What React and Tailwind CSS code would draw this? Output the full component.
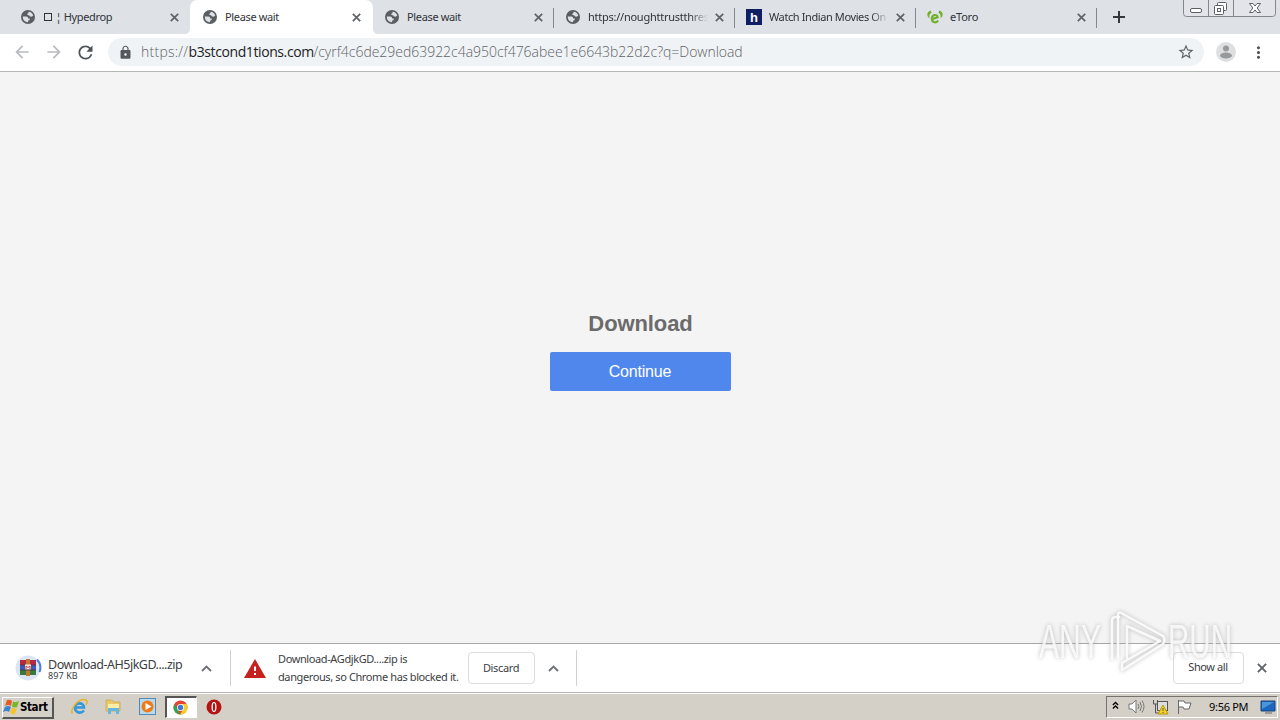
import React from 'react';
import { MdArrowBack, MdArrowForward, MdRefresh, MdLock, MdStarBorder, MdMoreVert } from 'react-icons/md';

const Globe = () => (
    <svg width="14" height="14" viewBox="0 0 14 14">
        <circle cx="7" cy="7" r="7" fill="#5a5e63" />
        <path d="M7.500 1.700C9.800 1.900 11.500 3.300 12.200 5.300 11.800 6.600 10.500 6.900 9.200 6.500 8.500 6.200 8.700 5.400 7.700 5.300 6.700 5.100 5.900 4.700 6.400 3.600 7.400 3.500 7.700 2.700 7.500 1.700Z" fill="#dee1e6" />
        <path d="M1.800 6.500H5.200C6.700 6.600 7.200 7.400 7.100 8.500H8.800C8.900 9.900 8.400 10.500 7.100 10.500V12.200C4.200 12.300 1.700 10.200 1.800 6.500Z" fill="#dee1e6" />
    </svg>
);

const Hotstar = () => (
    <div className="flex h-4 w-4 items-center justify-center bg-[#101f63] font-['Liberation_Sans',sans-serif] text-[13px] font-bold leading-none text-white">h</div>
);

const Etoro = () => (
    <svg width="17" height="16" viewBox="0 0 17 16">
        <path d="M3.800 1C-.6 2.500-.6 7 2.600 9.500 2.200 6.600 2.500 5 4.800 3.600ZM13.200 1C17.600 2.500 17.600 7 14.400 9.500 14.800 6.600 14.500 5 12.200 3.600Z" fill="#72b02a" />
        <path d="M5.200 10.300 11.300 8.200C10.800 4.700 5.200 5 5.200 9.800 5.200 14.400 10.400 14.600 11.800 11.700" fill="none" stroke="#72b02a" strokeWidth="2.300" />
    </svg>
);

const Cross = ({ size = 9 }) => (
    <svg width={size} height={size} viewBox="0 0 9 9" stroke="#5f6368" strokeWidth="1.700">
        <path d="M.8.8 8.2 8.2M8.2.8.8 8.2" />
    </svg>
);

const Chevron = () => (
    <svg width="11" height="7" viewBox="0 0 11 7" fill="none" stroke="#6f7377" strokeWidth="1.900">
        <path d="M1 6 5.5 1.5 10 6" />
    </svg>
);

const tabs = [
    { title: <><span className="ml-px mr-px inline-block size-2 border border-[#303338]" /> ¦ Hypedrop</>, icon: <Globe />, width: 'w-[182px]', text: 'tracking-[-0.35px]' },
    { title: 'Please wait', icon: <Globe />, width: 'w-[182px]', text: 'tracking-[-0.35px]', active: true },
    { title: 'Please wait', icon: <Globe />, width: 'w-[181px]', text: 'tracking-[-0.35px]' },
    { title: 'https://noughttrustthres', icon: <Globe />, width: 'w-[181px]', text: 'tracking-[-0.25px]', line: true, fade: true },
    { title: 'Watch Indian Movies On', icon: <Hotstar />, width: 'w-[181px]', text: 'tracking-[-0.4px]', line: true, fade: true },
    { title: 'eToro', icon: <Etoro />, width: 'w-[181px]', text: 'tracking-[-0.2px]', line: true },
];

const Tab = ({ tab }) => (
    <div className={`relative flex h-[34px] shrink-0 items-center ${tab.width}`}>
        {tab.active && (
            <svg className="absolute -left-1.5 top-0" width="194" height="34" viewBox="0 0 194 34">
                <path d="M0 34C4 34 6 32 6 28V8C6 3 9 0 14 0H181C186 0 189 3 189 8V28C189 32 191 34 194 34Z" fill="#fff" />
            </svg>
        )}
        {tab.line && <div className="absolute left-0 top-2 h-5 w-px bg-[#85888e]" />}
        <div className="relative ml-3 flex w-[18px] items-center justify-center pr-0.5">{tab.icon}</div>
        <div className={`relative ml-[5px] w-[120px] overflow-hidden whitespace-nowrap text-[11px] text-[#303338] ${tab.text} ${tab.fade ? 'mask-r-from-85%' : ''}`}>{tab.title}</div>
        <div className="relative ml-[7px]"><Cross /></div>
    </div>
);

const TabStrip = () => (
    <div className="flex h-[34px] items-start bg-[#dee1e6] pl-2">
        {tabs.map((tab, i) => <Tab key={i} tab={tab} />)}
        <div className="relative flex h-[34px] w-[88px] items-center pl-[17px]">
            <div className="absolute left-0 top-2 h-5 w-px bg-[#85888e]" />
            <svg width="12" height="12" viewBox="0 0 12 12" stroke="#34373b" strokeWidth="2"><path d="M6 0V12M0 6H12" /></svg>
        </div>
        <svg className="-ml-px" width="93" height="17" viewBox="0 0 93 17" fill="none" stroke="#83868d">
            <path d="M.5 0V13.5Q.5 16.5 3.5 16.5H89.5Q92.5 16.5 92.5 13.5V0M25.5 0V16.5M50.5 0V16.5" fill="#e2e4e9" />
            <g fill="#fff" stroke="#5c6068">
                <rect x="7.500" y="8.500" width="11" height="4" rx="1.500" />
                <rect x="34.500" y="2.500" width="9" height="8" rx="1" />
                <rect x="31.500" y="5.500" width="9" height="9" rx="1" />
                <rect x="34.500" y="8.500" width="3" height="3" />
                <path d="M66.500 3.500H70L72 6 74 3.500H77.500L74.200 8 77.500 12.500H74L72 10 70 12.500H66.500L69.800 8Z" />
            </g>
        </svg>
    </div>
);

const Toolbar = () => (
    <div className="flex h-[38px] items-center border-b border-[#b5b7b5] bg-white pb-px text-[#5f6368]">
        <MdArrowBack className="ml-3 text-[#b9bbbe]" size={20} />
        <MdArrowForward className="ml-3 text-[#b9bbbe]" size={20} />
        <MdRefresh className="ml-[11px] text-[#4e5257]" size={21} />
        <div className="ml-3 flex h-7 w-[1096px] items-center rounded-full bg-[#f0f3f5]">
            <MdLock className="ml-2.5 text-[#55595e]" size={15} />
            <div className="ml-2 flex w-[1036px] whitespace-nowrap pb-px font-['Open_Sans',sans-serif] text-[14px] font-light text-[#5f6368]">
                <span className="w-[47.500px] tracking-[0.25px]">https://</span>
                <span className="w-[125px] font-normal tracking-[-0.4px] text-[#202124]">b3stcond1tions.com</span>
                <span className="tracking-[-0.03px]">/cyrf4c6de29ed63922c4a950cf476abee1e6643b22d2c?q=Download</span>
            </div>
            <MdStarBorder className="shrink-0" size={18} />
        </div>
        <svg className="ml-3" width="20" height="20" viewBox="0 0 20 20">
            <circle cx="10" cy="10" r="10" fill="#dedfe0" />
            <circle cx="10" cy="6.500" r="3" fill="#98999b" />
            <ellipse cx="10" cy="13.500" rx="6" ry="3" fill="#98999b" />
        </svg>
        <MdMoreVert className="ml-[13px] text-[#4e5257]" size={19} />
    </div>
);

const Archive = () => (
    <svg width="27" height="26" viewBox="0 0 27 26">
        <circle cx="13" cy="13" r="12.500" fill="#dbe4f4" />
        <path d="M22 4.500A12 12 0 0 1 24.500 17" fill="none" stroke="#4580dd" strokeWidth="2" />
        <path d="M5 5H21V10H5Z" fill="#b52a43" />
        <path d="M5 10H21V15H5Z" fill="#4357b5" />
        <path d="M5 15H21V20H5Z" fill="#377b3a" />
        <path d="M11 4H15V21H11Z" fill="#c47732" />
        <path d="M10 9.500H16V14.500H10Z" fill="#f4efe8" />
        <path d="M11 14V11L13 12.500 15 11V14" fill="none" stroke="#c34135" />
        <path d="M5 10H10M16 10H21M5 15H21" stroke="#42333b" strokeWidth=".8" />
    </svg>
);

const Shelf = () => (
    <div className="flex h-[49px] items-center border-t border-[#a6a7a6] bg-white text-[11px] text-[#3c4043]">
        <div className="ml-[15px]"><Archive /></div>
        <div className="ml-1.5 flex w-[153px] flex-col whitespace-nowrap pt-0.5">
            <div className="text-[12.500px] leading-[13px] tracking-[-0.5px]">Download-AH5jkGD....zip</div>
            <div className="text-[9px] leading-[9px] tracking-[0.1px]">897 KB</div>
        </div>
        <Chevron />
        <div className="ml-[18px] h-9 w-px bg-[#cfd0d2]" />
        <svg className="ml-[13px]" width="22" height="19" viewBox="0 0 22 19">
            <path d="M11 0 22 19H0Z" fill="#c5221f" />
            <path d="M11 7.500V12M11 14V16" stroke="#fff" strokeWidth="2" />
        </svg>
        <div className="ml-3 w-[190px] whitespace-nowrap leading-[18px] tracking-[-0.39px]">
            <div>Download-AGdjkGD....zip is</div>
            <div>dangerous, so Chrome has blocked it.</div>
        </div>
        <button className="h-8 w-[67px] rounded-[4px] border border-[#dadce0] pr-px tracking-[-0.35px]">Discard</button>
        <div className="ml-[13px]"><Chevron /></div>
        <div className="ml-[17px] h-9 w-px bg-[#cfd0d2]" />
        <button className="ml-auto h-8 w-[71px] rounded-[4px] border border-[#dadce0] pb-0.5 pr-px tracking-[-0.4px]">Show all</button>
        <div className="ml-[13px] mr-[13px]"><Cross size={10} /></div>
    </div>
);

const Watermark = () => (
    <div className="pointer-events-none absolute left-[1030px] top-[602px]">
        <svg width="212" height="76" viewBox="0 0 212 76" className="drop-shadow-[0_0_2px_#aaa]">
            <g fill="none" stroke="#fff" strokeOpacity=".85" strokeWidth="2.500" strokeLinejoin="round" strokeLinecap="round">
                <path d="M89 15H86Q82 15 82 19V57" />
                <path d="M88 55V12Q89 9 93 12L133 34" />
                <path d="M97 56V24L130 39 92 61V68L133 42Q136 38 133 34" />
            </g>
            <g fill="#fff" fillOpacity=".8" fontFamily="Liberation Sans, sans-serif" fontSize="49">
                <text x="9" y="56" textLength="62" lengthAdjust="spacingAndGlyphs">ANY</text>
                <text x="138" y="56" textLength="64" lengthAdjust="spacingAndGlyphs">RUN</text>
            </g>
        </svg>
    </div>
);

const StartFlag = () => (
    <svg width="17" height="16" viewBox="0 0 17 16">
        <path d="M4 1Q7 0 9 2L8 7Q5 5 2 7Z" fill="#e85a24" />
        <path d="M10 2.500Q13 4 16 2L14 8Q11 9 9 7.500Z" fill="#75b72c" />
        <path d="M2 8Q5 6 8 8L6 13Q4 11 0 13Z" fill="#3b82d3" />
        <path d="M9 8.500Q11 10 14 9L12 15Q9 16 7 13.500Z" fill="#f5c32c" />
    </svg>
);

const Taskbar = () => (
    <div className="flex h-7 items-center border-t border-[#b8b5af] bg-[#d4d0c8] text-[11px] text-black shadow-[inset_0_1px_0_#fff]">
        <button className="ml-0.5 mt-0.5 flex h-[22px] w-[52px] items-center border-b-2 border-l border-r-2 border-t border-b-[#555] border-l-white border-r-[#555] border-t-white">
            <StartFlag /><span className="pt-px font-['DejaVu_Sans_Condensed','DejaVu_Sans',sans-serif] text-[11.500px] font-bold tracking-[-0.4px]">Start</span>
        </button>
        <svg className="ml-4" width="18" height="18" viewBox="0 0 18 18">
            <path d="M5 9.500H14C14 4 5 4 5 9.500 5 15 11 16 14 12.500" fill="none" stroke="#3598dc" strokeWidth="2.600" />
            <path d="M2.500 15.500C-1 12 9-1 16 2 18 3 17 5 16 7" fill="none" stroke="#e4b52c" strokeWidth="1.500" />
        </svg>
        <svg className="ml-[17px]" width="17" height="17" viewBox="0 0 17 17">
            <path d="M1 2H7L9 4H15V13H1Z" fill="#e9c967" stroke="#c6a349" strokeWidth=".7" />
            <path d="M3 6H14V10H3Z" fill="#f8edac" /><path d="M3 16V10H14V16H11V13H6V16Z" fill="#65b5df" />
        </svg>
        <svg className="ml-[17px]" width="17" height="17" viewBox="0 0 17 17">
            <rect x=".5" y=".5" width="16" height="16" fill="#b9d9ed" stroke="#548bb5" />
            <circle cx="8.500" cy="8.500" r="6" fill="#ee7b17" /><path d="M6.500 5 12.500 8.500 6.500 12Z" fill="#fff" />
        </svg>
        <div className="ml-[9px] flex h-[22px] w-[32px] items-center justify-center border-b border-l-2 border-r border-t-2 border-b-white border-l-[#555] border-r-white border-t-[#555] bg-white pr-0.5">
            <svg width="15" height="15" viewBox="0 0 15 15">
                <circle cx="7.500" cy="7.500" r="7" fill="#e44432" />
                <path d="M1.500 4 7 14.500A7 7 0 0 1 1.500 4Z" fill="#2da653" />
                <path d="M7.500 4H13.600A7 7 0 0 1 7 14.500L11 8Z" fill="#f6cc27" />
                <circle cx="7.500" cy="7.500" r="3.500" fill="#fff" /><circle cx="7.500" cy="7.500" r="2.700" fill="#3d78d2" />
            </svg>
        </div>
        <svg className="ml-[9px]" width="16" height="16" viewBox="0 0 16 16">
            <circle cx="8" cy="8" r="7.500" fill="#b51414" /><ellipse cx="8" cy="8" rx="2.500" ry="5" fill="#fff" /><ellipse cx="8" cy="8" rx="1.200" ry="4" fill="#b51414" />
        </svg>
        <div className="ml-auto mr-0.5 flex h-[22px] w-[172px] items-center border border-b-white border-l-[#77736c] border-r-white border-t-[#77736c]">
            <svg className="mb-0.5 ml-[5px]" width="7" height="9" viewBox="0 0 8 9" fill="none" stroke="#000" strokeWidth="1.500"><path d="M1 4 4 1 7 4M1 8 4 5 7 8" /></svg>
            <svg className="ml-[9px]" width="17" height="15" viewBox="0 0 17 15" stroke="#777" fill="none">
                <path d="M1 5H4L8 1V14L4 10H1Z" fill="#fff" /><path d="M10 5Q12 7.500 10 10M12 3Q15 7.500 12 12M14 1.500Q18 7.500 14 13.500" />
            </svg>
            <svg className="ml-[7px]" width="17" height="16" viewBox="0 0 17 16" stroke="#555">
                <rect x="5.500" y="2.500" width="10" height="9" fill="#ddd" /><path d="M1.500 1V5H5.500V1M3.500 5V14H8" fill="none" /><path d="M11 6 16 15H6Z" fill="#f8d21c" stroke="#b89610" /><path d="M11 9V12M11 13V14" />
            </svg>
            <svg className="ml-[7px]" width="17" height="16" viewBox="0 0 17 16" stroke="#666" fill="#fff"><path d="M2.500 1V15M2.500 2H8L9 4H15L13 10H8L7 8H3" /></svg>
            <span className="ml-4 w-[51px] whitespace-nowrap pt-px tracking-[-0.3px]">9:56 PM</span>
            <svg width="16" height="14" viewBox="0 0 16 14"><path d="M1 1H15V11H1Z" fill="#1d65bd" stroke="#17467d" /><path d="M2 2H14L2 9Z" fill="#4b96db" /><path d="M5 13H12" stroke="#666" /></svg>
        </div>
    </div>
);

const App = () => (
    <div className="relative flex h-[720px] w-[1280px] flex-col overflow-hidden font-['Noto_Sans',sans-serif]">
        <TabStrip />
        <Toolbar />
        <main className="flex flex-1 flex-col items-center bg-[#f4f4f4] pt-[238px] font-['Liberation_Sans',sans-serif]">
            <h1 className="pl-px text-[22px] font-bold leading-7 tracking-[-0.1px] text-[#6b6b6b]">Download</h1>
            <button className="mt-3.5 h-[39px] w-[181px] rounded-[2px] bg-[#5087ed] text-base tracking-[-0.2px] text-white">Continue</button>
        </main>
        <Shelf />
        <Taskbar />
        <Watermark />
    </div>
);

export default App;
